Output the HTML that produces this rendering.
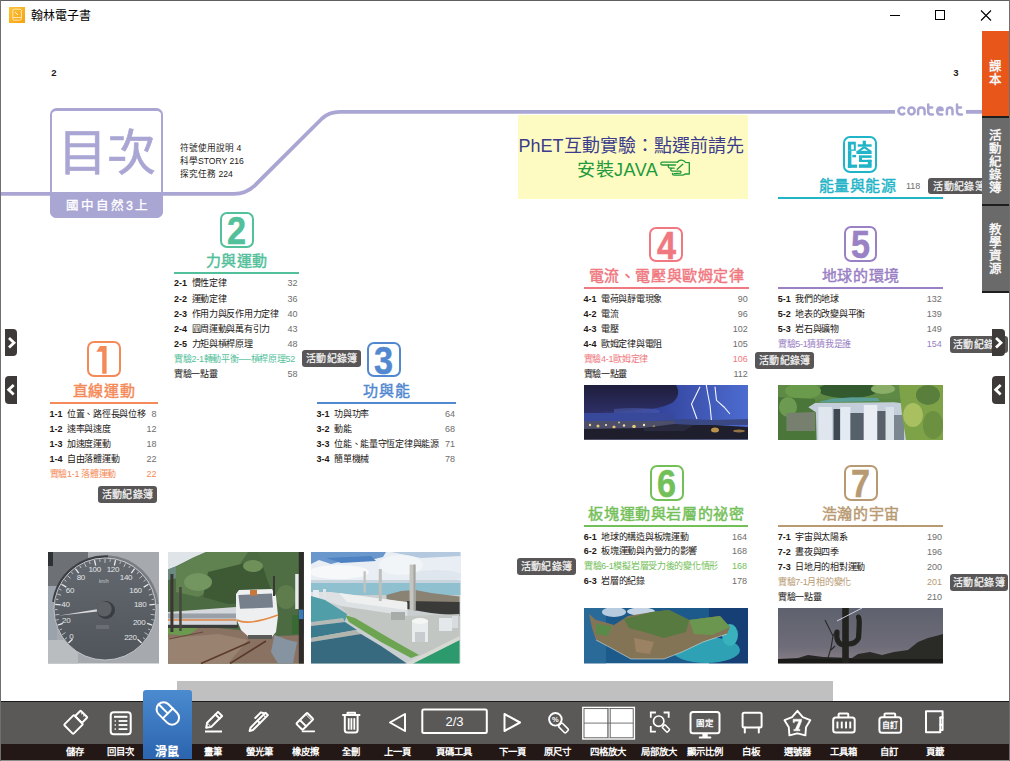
<!DOCTYPE html><html lang="zh-TW"><head><meta charset="utf-8"><style>
*{margin:0;padding:0;box-sizing:border-box}
html,body{width:1010px;height:761px;overflow:hidden;background:#fff}
body{position:relative;font-family:"Liberation Sans",sans-serif;color:#231815}
.ab{position:absolute}
.row{position:absolute;height:13px;font-size:9px;letter-spacing:-0.28px;line-height:13px;white-space:nowrap}
.row b{font-weight:bold;display:inline-block}
.row .pg{position:absolute;right:0;top:0;color:#6e6e6e;letter-spacing:0}
.row b{letter-spacing:0}
.ttl{position:absolute;font-size:15px;line-height:18px;font-weight:500;-webkit-text-stroke:0.45px;letter-spacing:0.6px;white-space:nowrap;text-align:center}
.nb{position:absolute;border:2.7px solid;border-radius:7px;font-weight:bold;text-align:center;font-size:38px;line-height:34.4px;-webkit-text-stroke:0.5px}
.nb span{display:inline-block;transform:scaleX(0.9)}
.ul{position:absolute;height:1.7px}
.badge{position:absolute;background:#585656;color:#f4f4f4;font-size:10px;letter-spacing:0.4px;text-indent:0.4px;font-weight:500;-webkit-text-stroke:0.25px;line-height:16px;height:16.5px;border-radius:3px;text-align:center;white-space:nowrap;overflow:hidden}
.tb{position:absolute;color:#fff;font-size:9.4px;font-weight:bold;line-height:14px;text-align:center;white-space:nowrap}
</style></head><body>
<svg class="ab" style="left:0;top:0" width="1010" height="761">
<path d="M0 193.8 L234 193.8 Q246 193.8 255 185.3 L322 118.5 Q329 111.85 340 111.85 L895 111.85" fill="none" stroke="#aaa6d4" stroke-width="3.8"/>
<path d="M966 111.85 L983 111.85" fill="none" stroke="#aaa6d4" stroke-width="3.8"/>
</svg>
<div class="ab" style="left:50.1px;top:107.7px;width:112.6px;height:110px;border:2.9px solid #aaa6d4;border-top-width:3.2px;border-radius:6.5px;background:#fff"></div>
<div class="ab" style="left:50.1px;top:191.9px;width:112.6px;height:25.8px;background:#aaa6d4;border-radius:0 0 6.5px 6.5px"></div>
<div class="ab" style="left:50px;top:123px;width:113px;text-align:center;font-size:49px;line-height:60px;color:#aaa6d4;font-weight:500;-webkit-text-stroke:0.6px">目次</div>
<div class="ab" style="left:51.5px;top:197px;width:113px;text-align:center;font-size:12.5px;line-height:18px;color:#fff;letter-spacing:2px;font-weight:500;-webkit-text-stroke:0.3px">國中自然3上</div>
<div class="ab" style="left:180px;top:141.8px;font-size:8.6px;line-height:13.3px;color:#231815">符號使用說明 4<br>科學STORY 216<br>探究任務 224</div>
<svg class="ab" style="left:0;top:0" width="1010" height="130"><g fill="none" stroke="#aaa6d4" stroke-width="2.5" stroke-linecap="round" stroke-linejoin="round"><path d="M904.3,108.3 A3.4,3.5 0 1 0 904.3,113.5"/><ellipse cx="911.5" cy="110.9" rx="3.2" ry="3.5"/><path d="M918.1,114.3 L918.1,110.6 Q918.1,107.4 921.35,107.4 Q924.6,107.4 924.6,110.6 L924.6,114.3"/><path d="M928.2,104.4 L928.2,111.5 Q928.2,114.4 931,114.4 L932.8,114.4 M928.2,107.6 L932.2,107.6"/><path d="M937.3,110 L942.6,110 Q942.6,107.4 939.9,107.4 Q937.2,107.4 937.2,110.9 Q937.2,114.4 940.2,114.4 L942.2,114.4"/><path d="M946.9,114.3 L946.9,110.6 Q946.9,107.4 949.7,107.4 Q952.5,107.4 952.5,110.6 L952.5,114.3"/><path d="M957,104.4 L957,111.5 Q957,114.4 959.8,114.4 L961.9,114.4 M957,107.6 L961,107.6"/></g></svg>
<div class="ab" style="left:51.3px;top:66.8px;font-size:9.5px;font-weight:bold;line-height:12px">2</div>
<div class="ab" style="left:953.3px;top:66.8px;font-size:9.5px;font-weight:bold;line-height:12px">3</div>
<div class="ab" style="left:518px;top:114.5px;width:230px;height:84.5px;background:#fdfbc2"></div>
<div class="ab" style="left:516px;top:135px;width:230px;text-align:center;font-size:18px;line-height:22px;color:#3c3b8c;white-space:nowrap">PhET互動實驗：點選前請先</div>
<div class="ab" style="left:577px;top:158.5px;font-size:18px;line-height:22px;color:#1e9a3c;white-space:nowrap;letter-spacing:0.5px">安裝JAVA</div>
<svg class="ab" style="left:655px;top:155px" width="40" height="27" viewBox="0 0 40 27"><g fill="none" stroke="#1e9a3c" stroke-width="1.3" stroke-linejoin="round" stroke-linecap="round"><path d="M22.5,7.2 L7,7.2 Q5.8,7.4 5.8,8.6 Q5.8,10 7,10 L20.5,10"/><path d="M22.5,7.2 Q24,5 26.5,5.2 Q29,5.4 30.5,7.4 L34.3,7.6 L34.3,19 L30.2,19 Q29,20.2 27,20.2 L18.8,20.2 Q17.2,20 17.4,18.4"/><path d="M13.4,10.2 Q12.8,12.8 14.8,13.2 L19.2,13.2"/><path d="M16.2,13.4 Q15,15.6 17.2,16.2 L25,16.2 Q26.6,16.8 25.6,18.2 L19,18.6"/><path d="M27.8,9.3 L22.2,14.3"/></g></svg>
<div class="nb" style="left:86.5px;top:340.9px;width:34.3px;height:36.1px;border-color:#f48a58;color:#f48a58"></div>
<svg class="ab" style="left:0;top:0" width="200" height="400"><path d="M96.3,351.8 L100,346 L106.6,345.9 L106.6,373.7 L102.2,373.7 L102.2,351.8 Z" fill="#f48a58"/></svg>
<div class="ttl" style="left:20.0px;width:168.1px;top:381.7px;color:#f48a58">直線運動</div>
<div class="ul" style="left:49.5px;width:108.1px;top:402.0px;background:#f48a58"></div>
<div class="row" style="left:49.5px;width:107.1px;top:408.2px;"><b style="width:17.5px">1-1</b><span>位置、路徑長與位移</span><span class="pg" style="">8</span></div>
<div class="row" style="left:49.5px;width:107.1px;top:423.2px;"><b style="width:17.5px">1-2</b><span>速率與速度</span><span class="pg" style="">12</span></div>
<div class="row" style="left:49.5px;width:107.1px;top:438.2px;"><b style="width:17.5px">1-3</b><span>加速度運動</span><span class="pg" style="">18</span></div>
<div class="row" style="left:49.5px;width:107.1px;top:453.2px;"><b style="width:17.5px">1-4</b><span>自由落體運動</span><span class="pg" style="">22</span></div>
<div class="row" style="left:49.5px;width:107.1px;top:468.2px;color:#f48a58;"><span>實驗1-1 落體運動</span><span class="pg" style="color:#f48a58">22</span></div>
<div class="badge" style="left:97.9px;top:485.9px;width:59.0px;height:17.100000000000023px;line-height:18.100000000000023px">活動紀錄簿</div>
<div class="nb" style="left:219.5px;top:212px;width:34px;height:36px;border-color:#52c09a;color:#52c09a"><span>2</span></div>
<div class="ttl" style="left:144.5px;width:184.60000000000002px;top:251.7px;color:#52c09a">力與運動</div>
<div class="ul" style="left:174px;width:124.60000000000002px;top:272.3px;background:#52c09a"></div>
<div class="row" style="left:174px;width:123.60000000000002px;top:277.2px;"><b style="width:17.5px">2-1</b><span>慣性定律</span><span class="pg" style="">32</span></div>
<div class="row" style="left:174px;width:123.60000000000002px;top:292.59999999999997px;"><b style="width:17.5px">2-2</b><span>運動定律</span><span class="pg" style="">36</span></div>
<div class="row" style="left:174px;width:123.60000000000002px;top:307.8px;"><b style="width:17.5px">2-3</b><span>作用力與反作用力定律</span><span class="pg" style="">40</span></div>
<div class="row" style="left:174px;width:123.60000000000002px;top:322.8px;"><b style="width:17.5px">2-4</b><span>圓周運動與萬有引力</span><span class="pg" style="">43</span></div>
<div class="row" style="left:174px;width:123.60000000000002px;top:337.7px;"><b style="width:17.5px">2-5</b><span>力矩與槓桿原理</span><span class="pg" style="">48</span></div>
<div class="row" style="left:174px;width:123.60000000000002px;top:352.7px;color:#52c09a;"><span>實驗2-1轉動平衡──槓桿原理52</span><span class="pg" style="color:#52c09a"></span></div>
<div class="row" style="left:174px;width:123.60000000000002px;top:367.7px;"><span>實驗一點靈</span><span class="pg" style="">58</span></div>
<div class="badge" style="left:302.3px;top:350px;width:58.599999999999966px;height:16.80000000000001px;line-height:17.80000000000001px">活動紀錄簿</div>
<div class="nb" style="left:366.6px;top:342px;width:34px;height:35px;border-color:#5188d0;color:#5188d0"><span>3</span></div>
<div class="ttl" style="left:287.1px;width:199.39999999999998px;top:381.7px;color:#5188d0">功與能</div>
<div class="ul" style="left:316.6px;width:139.39999999999998px;top:402.3px;background:#5188d0"></div>
<div class="row" style="left:316.6px;width:138.39999999999998px;top:407.9px;"><b style="width:17.5px">3-1</b><span>功與功率</span><span class="pg" style="">64</span></div>
<div class="row" style="left:316.6px;width:138.39999999999998px;top:422.7px;"><b style="width:17.5px">3-2</b><span>動能</span><span class="pg" style="">68</span></div>
<div class="row" style="left:316.6px;width:138.39999999999998px;top:437.7px;"><b style="width:17.5px">3-3</b><span>位能、能量守恆定律與能源</span><span class="pg" style="">71</span></div>
<div class="row" style="left:316.6px;width:138.39999999999998px;top:452.5px;"><b style="width:17.5px">3-4</b><span>簡單機械</span><span class="pg" style="">78</span></div>
<div class="nb" style="left:842.9px;top:136px;width:34px;height:36.9px;border-color:#1fb4c8;border-width:2.5px"></div>
<svg class="ab" style="left:835px;top:130px" width="50" height="48"><g fill="#1fb4c8"><rect x="12.9" y="11.7" width="7.9" height="9.1"/><rect x="12.9" y="20.8" width="3.5" height="17"/><rect x="12.9" y="34.6" width="9.2" height="3.2"/><rect x="17.3" y="24.9" width="3.8" height="2.4"/><rect x="27.7" y="10.7" width="3.2" height="5"/><rect x="22.7" y="14.3" width="13.9" height="2.4"/><polygon points="22.3,21 28.2,16.5 30.4,16.5 36.6,21 33.2,21 29.3,18.4 25.6,21"/><rect x="21.4" y="20.8" width="15.2" height="3.2"/><rect x="24" y="25.3" width="12.6" height="2.6"/><rect x="24" y="27.5" width="3" height="3.2"/><rect x="24" y="29.8" width="12.6" height="2.2"/><rect x="32.8" y="29.8" width="3.8" height="5.5"/><rect x="24" y="34.3" width="12.6" height="3.5"/></g><rect x="16.2" y="14.5" width="2.6" height="5" fill="#fff"/></svg>
<div class="ttl" style="left:810px;width:95px;top:177px;color:#1fb4c8">能量與能源</div>
<div class="ab" style="left:906px;top:180px;font-size:9px;line-height:12px;color:#6e6e6e">118</div>
<div class="ul" style="left:777.8px;width:165px;top:197px;background:#1fb4c8"></div>
<div class="badge" style="left:928px;top:177.6px;width:62px;height:16.900000000000006px;line-height:17.900000000000006px">活動紀錄簿</div>
<div class="nb" style="left:649px;top:226.6px;width:34.4px;height:35.8px;border-color:#f07880;color:#f07880"><span>4</span></div>
<div class="ttl" style="left:554.0px;width:225.29999999999995px;top:266.7px;color:#f07880">電流、電壓與歐姆定律</div>
<div class="ul" style="left:583.5px;width:165.29999999999995px;top:286.90000000000003px;background:#f07880"></div>
<div class="row" style="left:583.5px;width:164.29999999999995px;top:293.4px;"><b style="width:17.5px">4-1</b><span>電荷與靜電現象</span><span class="pg" style="">90</span></div>
<div class="row" style="left:583.5px;width:164.29999999999995px;top:308.2px;"><b style="width:17.5px">4-2</b><span>電流</span><span class="pg" style="">96</span></div>
<div class="row" style="left:583.5px;width:164.29999999999995px;top:322.8px;"><b style="width:17.5px">4-3</b><span>電壓</span><span class="pg" style="">102</span></div>
<div class="row" style="left:583.5px;width:164.29999999999995px;top:337.7px;"><b style="width:17.5px">4-4</b><span>歐姆定律與電阻</span><span class="pg" style="">105</span></div>
<div class="row" style="left:583.5px;width:164.29999999999995px;top:352.8px;color:#f07880;"><span>實驗4-1歐姆定律</span><span class="pg" style="color:#f07880">106</span></div>
<div class="row" style="left:583.5px;width:164.29999999999995px;top:367.7px;"><span>實驗一點靈</span><span class="pg" style="">112</span></div>
<div class="badge" style="left:755.3px;top:351.7px;width:58.60000000000002px;height:17.100000000000023px;line-height:18.100000000000023px">活動紀錄簿</div>
<div class="nb" style="left:843.7px;top:226.4px;width:33.7px;height:36px;border-color:#9a80c4;color:#9a80c4"><span>5</span></div>
<div class="ttl" style="left:748.3px;width:225.0px;top:267.3px;color:#9a80c4">地球的環境</div>
<div class="ul" style="left:777.8px;width:165.0px;top:287.3px;background:#9a80c4"></div>
<div class="row" style="left:777.8px;width:164.0px;top:293.2px;"><b style="width:17.5px">5-1</b><span>我們的地球</span><span class="pg" style="">132</span></div>
<div class="row" style="left:777.8px;width:164.0px;top:308.2px;"><b style="width:17.5px">5-2</b><span>地表的改變與平衡</span><span class="pg" style="">139</span></div>
<div class="row" style="left:777.8px;width:164.0px;top:323.2px;"><b style="width:17.5px">5-3</b><span>岩石與礦物</span><span class="pg" style="">149</span></div>
<div class="row" style="left:777.8px;width:164.0px;top:338.2px;color:#9a80c4;"><span>實驗5-1猜猜我是誰</span><span class="pg" style="color:#9a80c4">154</span></div>
<div class="badge" style="left:950px;top:336.1px;width:57.60000000000002px;height:16.599999999999966px;line-height:17.599999999999966px">活動紀錄簿</div>
<div class="nb" style="left:650px;top:465px;width:33.5px;height:35.8px;border-color:#74c058;color:#74c058"><span>6</span></div>
<div class="ttl" style="left:554.3px;width:224.20000000000005px;top:505.2px;color:#74c058">板塊運動與岩層的祕密</div>
<div class="ul" style="left:583.8px;width:164.20000000000005px;top:525.3px;background:#74c058"></div>
<div class="row" style="left:583.8px;width:163.20000000000005px;top:530.9000000000001px;"><b style="width:17.5px">6-1</b><span>地球的構造與板塊運動</span><span class="pg" style="">164</span></div>
<div class="row" style="left:583.8px;width:163.20000000000005px;top:545.4000000000001px;"><b style="width:17.5px">6-2</b><span>板塊運動與內營力的影響</span><span class="pg" style="">168</span></div>
<div class="row" style="left:583.8px;width:163.20000000000005px;top:560.2px;color:#74c058;"><span>實驗6-1模擬岩層受力後的變化情形</span><span class="pg" style="color:#74c058">168</span></div>
<div class="row" style="left:583.8px;width:163.20000000000005px;top:575.2px;"><b style="width:17.5px">6-3</b><span>岩層的紀錄</span><span class="pg" style="">178</span></div>
<div class="badge" style="left:517.1px;top:557.9px;width:58.60000000000002px;height:17.100000000000023px;line-height:18.100000000000023px">活動紀錄簿</div>
<div class="nb" style="left:843.7px;top:464.5px;width:34.3px;height:36px;border-color:#b89a72;color:#b89a72"><span>7</span></div>
<div class="ttl" style="left:748.3px;width:225.20000000000005px;top:504.7px;color:#b89a72">浩瀚的宇宙</div>
<div class="ul" style="left:777.8px;width:165.20000000000005px;top:524.9px;background:#b89a72"></div>
<div class="row" style="left:777.8px;width:164.20000000000005px;top:531.2px;"><b style="width:17.5px">7-1</b><span>宇宙與太陽系</span><span class="pg" style="">190</span></div>
<div class="row" style="left:777.8px;width:164.20000000000005px;top:546.2px;"><b style="width:17.5px">7-2</b><span>晝夜與四季</span><span class="pg" style="">196</span></div>
<div class="row" style="left:777.8px;width:164.20000000000005px;top:560.7px;"><b style="width:17.5px">7-3</b><span>日地月的相對運動</span><span class="pg" style="">200</span></div>
<div class="row" style="left:777.8px;width:164.20000000000005px;top:575.7px;color:#b89a72;"><span>實驗7-1月相的變化</span><span class="pg" style="color:#b89a72">201</span></div>
<div class="row" style="left:777.8px;width:164.20000000000005px;top:590.7px;"><span>實驗一點靈</span><span class="pg" style="">210</span></div>
<div class="badge" style="left:949.8px;top:573.7px;width:58.200000000000045px;height:17.0px;line-height:18.0px">活動紀錄簿</div>
<svg class="ab" style="left:48px;top:552px" width="111" height="111.5" viewBox="0 0 111 111.5" preserveAspectRatio="none"><defs><linearGradient id="spd" x1="0" y1="0" x2="0" y2="1"><stop offset="0" stop-color="#646970"/><stop offset="1" stop-color="#50555b"/></linearGradient></defs><rect width="111" height="111.5" fill="#a6aaae"/><rect x="0" y="0" width="40" height="34" fill="#6d7176"/><rect x="0" y="0" width="5" height="14" fill="#2e3134"/><rect x="0" y="34" width="9" height="54" fill="#9aa3ac"/><rect x="0" y="88" width="30" height="23.5" fill="#b9bdc0"/><path d="M5.5,50 A52.5,52.5 0 0 1 60,4.5" fill="none" stroke="#3c3f44" stroke-width="2.6"/><path d="M60,4.5 A52.5,52.5 0 0 1 109.5,52" fill="none" stroke="#7a7e82" stroke-width="2.6"/><circle cx="57" cy="57" r="51" fill="url(#spd)" stroke="#c6cace" stroke-width="0.9"/><line x1="20.4" y1="91.1" x2="24.5" y2="87.3" stroke="#e8eaec" stroke-width="1.3"/><line x1="17.0" y1="87.1" x2="19.0" y2="85.6" stroke="#e8eaec" stroke-width="0.7"/><line x1="14.1" y1="82.7" x2="17.5" y2="80.6" stroke="#e8eaec" stroke-width="0.7"/><line x1="11.6" y1="78.0" x2="13.9" y2="77.0" stroke="#e8eaec" stroke-width="0.7"/><line x1="9.7" y1="73.1" x2="14.9" y2="71.4" stroke="#e8eaec" stroke-width="1.3"/><line x1="8.2" y1="68.1" x2="10.7" y2="67.5" stroke="#e8eaec" stroke-width="0.7"/><line x1="7.3" y1="62.9" x2="11.3" y2="62.4" stroke="#e8eaec" stroke-width="0.7"/><line x1="7.0" y1="57.6" x2="9.5" y2="57.6" stroke="#e8eaec" stroke-width="0.7"/><line x1="7.2" y1="52.3" x2="12.7" y2="52.8" stroke="#e8eaec" stroke-width="1.3"/><line x1="8.0" y1="47.1" x2="10.4" y2="47.6" stroke="#e8eaec" stroke-width="0.7"/><line x1="9.3" y1="42.0" x2="13.1" y2="43.2" stroke="#e8eaec" stroke-width="0.7"/><line x1="11.1" y1="37.1" x2="13.4" y2="38.1" stroke="#e8eaec" stroke-width="0.7"/><line x1="13.5" y1="32.3" x2="18.3" y2="35.1" stroke="#e8eaec" stroke-width="1.3"/><line x1="16.3" y1="27.9" x2="18.4" y2="29.4" stroke="#e8eaec" stroke-width="0.7"/><line x1="19.6" y1="23.8" x2="22.6" y2="26.4" stroke="#e8eaec" stroke-width="0.7"/><line x1="23.3" y1="20.0" x2="25.0" y2="21.9" stroke="#e8eaec" stroke-width="0.7"/><line x1="27.4" y1="16.7" x2="30.7" y2="21.1" stroke="#e8eaec" stroke-width="1.3"/><line x1="31.8" y1="13.8" x2="33.1" y2="16.0" stroke="#e8eaec" stroke-width="0.7"/><line x1="36.5" y1="11.4" x2="38.2" y2="15.0" stroke="#e8eaec" stroke-width="0.7"/><line x1="41.4" y1="9.5" x2="42.2" y2="11.9" stroke="#e8eaec" stroke-width="0.7"/><line x1="46.5" y1="8.1" x2="47.7" y2="13.5" stroke="#e8eaec" stroke-width="1.3"/><line x1="51.7" y1="7.3" x2="52.0" y2="9.8" stroke="#e8eaec" stroke-width="0.7"/><line x1="57.0" y1="7.0" x2="57.0" y2="11.0" stroke="#e8eaec" stroke-width="0.7"/><line x1="62.3" y1="7.3" x2="62.0" y2="9.8" stroke="#e8eaec" stroke-width="0.7"/><line x1="67.5" y1="8.1" x2="66.3" y2="13.5" stroke="#e8eaec" stroke-width="1.3"/><line x1="72.6" y1="9.5" x2="71.8" y2="11.9" stroke="#e8eaec" stroke-width="0.7"/><line x1="77.5" y1="11.4" x2="75.8" y2="15.0" stroke="#e8eaec" stroke-width="0.7"/><line x1="82.2" y1="13.8" x2="80.9" y2="16.0" stroke="#e8eaec" stroke-width="0.7"/><line x1="86.6" y1="16.7" x2="83.3" y2="21.1" stroke="#e8eaec" stroke-width="1.3"/><line x1="90.7" y1="20.0" x2="89.0" y2="21.9" stroke="#e8eaec" stroke-width="0.7"/><line x1="94.4" y1="23.8" x2="91.4" y2="26.4" stroke="#e8eaec" stroke-width="0.7"/><line x1="97.7" y1="27.9" x2="95.6" y2="29.4" stroke="#e8eaec" stroke-width="0.7"/><line x1="100.5" y1="32.3" x2="95.7" y2="35.1" stroke="#e8eaec" stroke-width="1.3"/><line x1="102.9" y1="37.1" x2="100.6" y2="38.1" stroke="#e8eaec" stroke-width="0.7"/><line x1="104.7" y1="42.0" x2="100.9" y2="43.2" stroke="#e8eaec" stroke-width="0.7"/><line x1="106.0" y1="47.1" x2="103.6" y2="47.6" stroke="#e8eaec" stroke-width="0.7"/><line x1="106.8" y1="52.3" x2="101.3" y2="52.8" stroke="#e8eaec" stroke-width="1.3"/><line x1="107.0" y1="57.6" x2="104.5" y2="57.6" stroke="#e8eaec" stroke-width="0.7"/><line x1="106.7" y1="62.9" x2="102.7" y2="62.4" stroke="#e8eaec" stroke-width="0.7"/><line x1="105.8" y1="68.1" x2="103.3" y2="67.5" stroke="#e8eaec" stroke-width="0.7"/><line x1="104.3" y1="73.1" x2="99.1" y2="71.4" stroke="#e8eaec" stroke-width="1.3"/><line x1="102.4" y1="78.0" x2="100.1" y2="77.0" stroke="#e8eaec" stroke-width="0.7"/><line x1="99.9" y1="82.7" x2="96.5" y2="80.6" stroke="#e8eaec" stroke-width="0.7"/><line x1="97.0" y1="87.1" x2="95.0" y2="85.6" stroke="#e8eaec" stroke-width="0.7"/><line x1="93.6" y1="91.1" x2="89.5" y2="87.3" stroke="#e8eaec" stroke-width="1.3"/><text x="23.3" y="86.80000000000001" font-size="8" fill="#e2e4e6" text-anchor="middle" font-family="Liberation Sans" letter-spacing="-0.3">0</text><text x="18.2" y="71.4" font-size="8" fill="#e2e4e6" text-anchor="middle" font-family="Liberation Sans" letter-spacing="-0.3">20</text><text x="17.5" y="54.699999999999996" font-size="8" fill="#e2e4e6" text-anchor="middle" font-family="Liberation Sans" letter-spacing="-0.3">40</text><text x="21.9" y="40.5" font-size="8" fill="#e2e4e6" text-anchor="middle" font-family="Liberation Sans" letter-spacing="-0.3">60</text><text x="32.8" y="28.4" font-size="8" fill="#e2e4e6" text-anchor="middle" font-family="Liberation Sans" letter-spacing="-0.3">80</text><text x="46.7" y="20.4" font-size="8" fill="#e2e4e6" text-anchor="middle" font-family="Liberation Sans" letter-spacing="-0.3">100</text><text x="64.9" y="20.4" font-size="8" fill="#e2e4e6" text-anchor="middle" font-family="Liberation Sans" letter-spacing="-0.3">120</text><text x="78" y="28.4" font-size="8" fill="#e2e4e6" text-anchor="middle" font-family="Liberation Sans" letter-spacing="-0.3">140</text><text x="87.5" y="40.5" font-size="8" fill="#e2e4e6" text-anchor="middle" font-family="Liberation Sans" letter-spacing="-0.3">160</text><text x="92.2" y="55.4" font-size="8" fill="#e2e4e6" text-anchor="middle" font-family="Liberation Sans" letter-spacing="-0.3">180</text><text x="91.2" y="73.2" font-size="8" fill="#e2e4e6" text-anchor="middle" font-family="Liberation Sans" letter-spacing="-0.3">200</text><text x="82.4" y="87.5" font-size="8" fill="#e2e4e6" text-anchor="middle" font-family="Liberation Sans" letter-spacing="-0.3">220</text><text x="56" y="31" font-size="4.5" fill="#c8cacc" text-anchor="middle" font-family="Liberation Sans">km/h</text><rect x="48" y="73" width="13" height="4" fill="#6a6e72"/><polygon points="10,63.8 49,57.2 49.5,59.5" fill="#d8dadc"/><circle cx="58" cy="58" r="9" fill="#3a3d41"/><circle cx="56.2" cy="56.9" r="7.5" fill="#5d6166"/></svg>
<svg class="ab" style="left:168px;top:552px" width="136.3" height="111.5" viewBox="0 0 136.3 111.5" preserveAspectRatio="none"><rect width="136.3" height="111.5" fill="#4d6b42"/>
<polygon points="0,0 38.2,0 25,5.8 7.6,14.6 0,17.5" fill="#dfe4e8"/>
<polygon points="0,17.5 7.6,14.6 10,26 0,28" fill="#6c8a80"/>
<polygon points="8,15 25,5.8 38.2,0 80,0 60,30 30,45 8,40" fill="#5f8250"/>
<polygon points="40,20 90,8 110,30 100,50 60,52 35,45" fill="#3d5a34"/>
<polygon points="90,0 136.3,0 136.3,60 110,55 100,30" fill="#506e44"/>
<ellipse cx="30" cy="30" rx="14" ry="9" fill="#739560"/>
<ellipse cx="85" cy="14" rx="10" ry="6" fill="#6f9058"/>
<ellipse cx="118" cy="45" rx="10" ry="12" fill="#5e7c4c"/>
<polygon points="0,74 40,75 70,78 110,84 136.3,83 136.3,111.5 0,111.5" fill="#8a7262"/>
<polygon points="0,86 50,82 80,88 60,111.5 0,111.5" fill="#9a8270"/>
<polygon points="0,76 30,76 20,84 0,82" fill="#6a9a50"/>
<path d="M33,111.5 L82,90 M62,111.5 L98,89" stroke="#5a3a2a" stroke-width="1.6" fill="none"/>
<path d="M1,87 L35,80" stroke="#6a4a3a" stroke-width="1.2" fill="none"/>
<polygon points="106.5,83 120,88 129,90 125,111.5 110,111.5 103,100" fill="#8694a2"/>
<polygon points="0,60 68,55 69,74 0,73" fill="#d4d8dc"/>
<rect x="0" y="61.5" width="68" height="5" fill="#9aa0a8"/>
<rect x="0" y="67.2" width="68" height="1.5" fill="#de8444"/>
<rect x="0" y="72.8" width="70" height="3.2" fill="#3c3c3a"/>
<polygon points="68,42 71,38 104,37 108,44 110,64 108,80 103,86 82,86 73,78 68,66" fill="#eeeff1"/>
<polygon points="70.5,43 104,41.5 105,55.5 72,56.8" fill="#75808c"/>
<rect x="82" y="38" width="7" height="5.5" fill="#c8783c"/>
<path d="M69,68 Q80,74 110,63" stroke="#e48a44" stroke-width="1.6" fill="none"/>
<rect x="80" y="83" width="24" height="4" fill="#5a5a58"/>
<rect x="2.4" y="22" width="3" height="58" fill="#3a3632"/>
<rect x="11.2" y="35" width="2.5" height="44" fill="#4a4640"/>
<rect x="105" y="24" width="2" height="20" fill="#3a3a34"/>
<rect x="127.2" y="22" width="3.6" height="35" fill="#e6eaea"/>
<rect x="124" y="63" width="7" height="19" fill="#3a6a34"/>
<rect x="130.8" y="0" width="5" height="111.5" fill="#2e2c2a"/>
<rect x="131" y="57.6" width="4.5" height="9.5" fill="#3a78bc"/></svg>
<svg class="ab" style="left:311.2px;top:552px" width="149.4" height="111.5" viewBox="0 0 149.4 111.5" preserveAspectRatio="none"><rect width="149.4" height="111.5" fill="#c9ced0"/>
<rect x="0" y="0" width="149.4" height="31" fill="#e8eef4"/>
<polygon points="0,0 75,0 72,5 55,9 40,7 20,12 8,8 0,12" fill="#6a98cc"/>
<polygon points="15,6 60,4 65,9 30,11" fill="#4e82c2"/>
<polygon points="80,0 149.4,0 149.4,4 110,6" fill="#b4c8de"/>
<ellipse cx="28" cy="20" rx="30" ry="7" fill="#f6f8fa"/>
<ellipse cx="90" cy="13" rx="22" ry="10" fill="#f2f5f8"/>
<ellipse cx="125" cy="24" rx="26" ry="6" fill="#dfe6ee"/>
<rect x="0" y="28" width="149.4" height="4" fill="#c8d4de"/>
<rect x="0" y="31" width="149.4" height="12" fill="#8ec0d0"/>
<polygon points="75.5,43 90,39 104,37.9 120,41 148.5,44.6 148.5,62.4 96,54 75.5,47" fill="#8a8272"/>
<polygon points="96,49 148.5,50 148.5,64 120,61 96,57" fill="#3a3a38"/>
<polygon points="0,40 20,40 96.4,50.5 96.4,68.3 60,64 30,54 0,44" fill="#dde1e3"/>
<polygon points="28,41 96,50 96,58 36,50" fill="#eef0f0"/>
<rect x="2" y="38" width="6" height="10" fill="#e8ecee"/><rect x="12" y="37" width="3" height="10" fill="#e0e4e6"/>
<polygon points="30,54 96.4,64 148.5,62 148.5,86 108,104 72,86 40,66" fill="#c2c6c2"/>
<polygon points="0,44 14,48 36,62 34,69 0,71" fill="#4f9ea8"/>
<polygon points="0,70 32,66 34,70 0,74" fill="#b6bab6"/>
<polygon points="0,74 34,70 46,78 0,86" fill="#3c7a8e"/>
<polygon points="0,86 44,78 50,82 0,90" fill="#b2b4ae"/>
<polygon points="0,90 50,82 70,94 96,111.5 0,111.5" fill="#376a7e"/>
<polygon points="34,63 44,66 78,86 108,103 100,106 70,90 38,70" fill="#6ca452"/>
<polygon points="148.5,88 148.5,111.5 102,111.5" fill="#2c9a6c"/>
<polygon points="148.5,84 148.5,88 102,111.5 94,111.5" fill="#d6d8d2"/>
<rect x="52.5" y="19.3" width="2.3" height="21.5" fill="#c2c2be"/>
<rect x="67.8" y="17.1" width="3" height="32" fill="#bebeba"/>
<rect x="98.6" y="12.6" width="5.9" height="45.4" fill="#c4c4c0"/>
<rect x="102.5" y="12.6" width="2" height="45.4" fill="#a4a4a0"/>
<rect x="80" y="60" width="14" height="8" fill="#a8aca8"/>
<rect x="101" y="68" width="16" height="22" fill="#e8ecec"/>
<ellipse cx="109" cy="69" rx="8" ry="3" fill="#f4f6f6"/>
<rect x="104" y="80" width="10" height="10" fill="#c8ccce"/>
<rect x="128" y="66" width="13" height="13" fill="#e4e8ea"/>
<rect x="141" y="64" width="6" height="12" fill="#d8dcde"/></svg>
<svg class="ab" style="left:583.7px;top:385px" width="164.6" height="54.6" viewBox="0 0 164.6 54.6" preserveAspectRatio="none"><defs><linearGradient id="lg1" x1="0" x2="1"><stop offset="0" stop-color="#2e2d5a"/><stop offset="0.45" stop-color="#33449c"/><stop offset="1" stop-color="#4d6cd0"/></linearGradient>
<linearGradient id="lg2" x1="0" y1="0" x2="0" y2="1"><stop offset="0" stop-color="#1f1e3c"/><stop offset="1" stop-color="#2d2f66"/></linearGradient></defs>
<rect width="164.6" height="54.6" fill="url(#lg1)"/>
<path d="M0,0 L92,0 Q98,10 88,18 Q76,24 60,24 Q40,27 20,26 L0,28 Z" fill="url(#lg2)"/>
<path d="M30,24 Q50,22 70,24 Q80,26 74,28 Q50,30 30,29 Z" fill="#4a5aa8" opacity="0.6"/>
<rect x="0" y="28" width="90" height="9" fill="#38489a"/>
<polygon points="70,36 100,34 130,35 164.6,34 164.6,40 70,40" fill="#3a4884"/>
<polygon points="0,36 90,36 92,44 0,45" fill="#4c4e6a"/>
<circle cx="6" cy="40" r="1.2" fill="#f0d890"/><circle cx="14" cy="41" r="1.5" fill="#e8c878"/><circle cx="22" cy="40" r="1" fill="#fff0c0"/>
<circle cx="30" cy="42" r="1.6" fill="#e8c070"/><circle cx="40" cy="40.5" r="1.2" fill="#f4e0a0"/><circle cx="50" cy="41.5" r="1.8" fill="#e8c878"/>
<circle cx="60" cy="40" r="1.2" fill="#f8e8b0"/><circle cx="70" cy="42" r="1.4" fill="#d8b068"/><circle cx="35" cy="37.5" r="1" fill="#d0c0a0"/>
<polygon points="0,44 60,43 90,40 130,40 164.6,42 164.6,54.6 0,54.6" fill="#1e1e2c"/>
<polygon points="60,43 90,39 110,40 100,46 60,46" fill="#2a2a3e"/>
<ellipse cx="131" cy="45" rx="4" ry="2.5" fill="#d8a850" opacity="0.85"/>
<ellipse cx="155" cy="46" rx="6" ry="1.5" fill="#c89850" opacity="0.7"/>
<path d="M122.3,0 L124,10 L126,20 L127.4,35 M116,1.7 L111,12 L107.5,19 L113,34 M131,1.7 L132.5,15.3 L140,22 L146,29" stroke="#f2f5ff" stroke-width="1.1" fill="none"/></svg>
<svg class="ab" style="left:777.7px;top:385px" width="165" height="55" viewBox="0 0 165 55" preserveAspectRatio="none"><rect width="165" height="55" fill="#5a8844"/>
<rect x="0" y="0" width="165" height="14" fill="#5e8a46"/>
<ellipse cx="70" cy="5" rx="30" ry="8" fill="#33592f"/>
<ellipse cx="25" cy="6" rx="18" ry="8" fill="#6a9a4c"/>
<ellipse cx="105" cy="4" rx="12" ry="5" fill="#8aae68"/>
<polygon points="0,12 37,14 38,55 0,55" fill="#4a763a"/>
<ellipse cx="10" cy="22" rx="9" ry="10" fill="#6c9a50"/>
<polygon points="8.4,28 37,27 37,46 8.4,46" fill="#77806e"/>
<polygon points="42,16.4 53.9,13.8 74,12.2 99.3,13 101.8,15.9 42,17.5" fill="#5a9e98"/>
<polygon points="30.3,22.3 37,18 116.2,17.2 129.6,18.9 126.2,30.7 129.6,55 38.7,55 37.9,27.3" fill="#c4ceda"/>
<rect x="40.4" y="22" width="13.5" height="33" fill="#dfe6ee"/>
<rect x="55.5" y="24" width="6.8" height="31" fill="#3e4852"/>
<rect x="62.3" y="22" width="10.1" height="33" fill="#e4eaf2"/>
<rect x="72.4" y="28" width="13.4" height="27" fill="#56606a"/>
<rect x="85.8" y="20" width="13.5" height="35" fill="#e8eef4"/>
<rect x="99.3" y="26" width="8.4" height="29" fill="#58606a"/>
<rect x="107.7" y="22" width="8.3" height="33" fill="#d8e0e8"/>
<rect x="116" y="30" width="10" height="25" fill="#7a8690"/>
<polygon points="121,0 165,0 165,55 128,55 124,30" fill="#7ea248"/>
<ellipse cx="135" cy="30" rx="10" ry="12" fill="#a8c060"/>
<ellipse cx="155" cy="40" rx="10" ry="14" fill="#6a9040"/>
<ellipse cx="150" cy="10" rx="12" ry="10" fill="#5a7e3c"/></svg>
<svg class="ab" style="left:583.7px;top:608.3px" width="164.6" height="55.3" viewBox="0 0 164.6 55.3" preserveAspectRatio="none"><rect width="164.6" height="55.3" fill="#1d5a8c"/>
<rect x="0" y="0" width="22" height="55.3" fill="#2a6a98"/>
<rect x="125" y="0" width="39.6" height="55.3" fill="#163f76"/>
<ellipse cx="30" cy="4" rx="12" ry="5" fill="#b8cce0"/>
<ellipse cx="57" cy="3.5" rx="14" ry="4" fill="#c4d4e4"/>
<ellipse cx="122" cy="42" rx="34" ry="13" fill="#2ea2b4"/>
<ellipse cx="146" cy="27" rx="8" ry="11" fill="#3ab2be"/>
<polygon points="5,6 12,12 20,14 30,17 44,8 68,4 85,2 105,12 136,8 146,19 143,26 119,34 98,44 80,51 47,51 27,40 12,32 8,20" fill="#847456"/>
<polygon points="40,11 68,4 85,2 105,12 102,24 80,30 60,24 45,20" fill="#567a40"/>
<polygon points="105,12 136,8 146,19 128,27 110,26" fill="#6a9650"/>
<polygon points="12,16 28,18 24,28 12,26" fill="#5a8a4a"/>
<polygon points="50,30 70,34 66,46 52,44" fill="#9a8262"/>
<path d="M12,32 L27,40 L47,51 L80,51 L98,44 L119,34 L143,26" stroke="#d8e8ec" stroke-width="0.8" fill="none" opacity="0.7"/></svg>
<svg class="ab" style="left:778.1px;top:608.3px" width="165" height="55.3" viewBox="0 0 165 55.3" preserveAspectRatio="none"><defs><linearGradient id="cg1" x1="0" y1="0" x2="0" y2="1"><stop offset="0" stop-color="#5e626e"/><stop offset="0.7" stop-color="#6e6c78"/><stop offset="1" stop-color="#8a8088"/></linearGradient></defs>
<rect width="165" height="55.3" fill="url(#cg1)"/>
<polygon points="74,50 80,46 92,44 104,47 116,44 130,42 140,34 150,30 158,28 165,26 165,55.3 74,55.3" fill="#2a2a26"/>
<polygon points="20,50 30,47 45,49 74,50 74,55.3 0,55.3 0,51" fill="#262624"/>
<rect x="0" y="51" width="165" height="4.3" fill="#1a1a18"/>
<path d="M67.5,0 L67.5,55" stroke="#22221f" stroke-width="6.6"/>
<path d="M59,24 Q57.5,36 66,37 M80.5,9 Q82,9 80.5,30 Q78,36 70,36" stroke="#22221f" stroke-width="5.2" fill="none" stroke-linecap="round"/>
<path d="M47,12 L55,28 L53,40 L50,50 M55,28 L58,22 M53,42 L57,38" stroke="#2a2826" stroke-width="1.1" fill="none"/>
<path d="M59,13 L84,0" stroke="#d8e0ee" stroke-width="0.9"/></svg>
<div class="ab" style="left:4.5px;top:328.5px;width:12.7px;height:27.4px;background:#3e3a39;border-radius:0 4px 4px 0"></div>
<svg class="ab" style="left:4.5px;top:328.5px" width="13" height="28"><path d="M4,9 L9,13.7 L4,18.4" fill="none" stroke="#fff" stroke-width="2.8" stroke-linejoin="miter" stroke-miterlimit="3"/></svg>
<div class="ab" style="left:4.5px;top:376.2px;width:12.7px;height:27.4px;background:#3e3a39;border-radius:4px 0 0 4px"></div>
<svg class="ab" style="left:4.5px;top:376.2px" width="13" height="28"><path d="M8.7,9 L3.7,13.7 L8.7,18.4" fill="none" stroke="#fff" stroke-width="2.8" stroke-linejoin="miter" stroke-miterlimit="3"/></svg>
<div class="ab" style="left:992.2px;top:328.5px;width:12.7px;height:27.4px;background:#3e3a39;border-radius:0 4px 4px 0"></div>
<svg class="ab" style="left:992.2px;top:328.5px" width="13" height="28"><path d="M4,9 L9,13.7 L4,18.4" fill="none" stroke="#fff" stroke-width="2.8" stroke-linejoin="miter" stroke-miterlimit="3"/></svg>
<div class="ab" style="left:992.2px;top:376.2px;width:12.7px;height:27.4px;background:#3e3a39;border-radius:4px 0 0 4px"></div>
<svg class="ab" style="left:992.2px;top:376.2px" width="13" height="28"><path d="M8.7,9 L3.7,13.7 L8.7,18.4" fill="none" stroke="#fff" stroke-width="2.8" stroke-linejoin="miter" stroke-miterlimit="3"/></svg>
<div class="ab" style="left:982.1px;top:116px;width:26.9px;height:176.6px;background:#6b6a6a"></div>
<div class="ab" style="left:982.1px;top:31px;width:26.9px;height:85.4px;background:#e8561a"></div>
<div class="ab" style="left:982.1px;top:116.4px;width:26.9px;height:1.9px;background:#1e1e1e"></div>
<div class="ab" style="left:982.1px;top:204px;width:26.9px;height:2px;background:#1e1e1e"></div>
<div class="ab" style="left:982.1px;top:290.8px;width:26.9px;height:1.8px;background:#1e1e1e"></div>
<div class="ab" style="left:982.8px;top:61.400000000000006px;width:26px;text-align:center;color:#f4f4f4;font-size:12.5px;line-height:13px;font-weight:bold">課<br>本</div>
<div class="ab" style="left:982.8px;top:129.8px;width:26px;text-align:center;color:#f4f4f4;font-size:12.5px;line-height:13px;font-weight:bold">活<br>動<br>紀<br>錄<br>簿</div>
<div class="ab" style="left:982.8px;top:223.6px;width:26px;text-align:center;color:#f4f4f4;font-size:12.5px;line-height:13px;font-weight:bold">教<br>學<br>資<br>源</div>
<div class="ab" style="left:177px;top:681px;width:656px;height:20px;background:#c0c0c0"></div>
<div class="ab" style="left:0;top:700.5px;width:1010px;height:1.5px;background:#1a1a1a"></div>
<div class="ab" style="left:0;top:702px;width:1010px;height:42px;background:#5a5958"></div>
<div class="ab" style="left:0;top:743.6px;width:1010px;height:16.2px;background:#231815"></div>
<div class="ab" style="left:0;top:759.8px;width:1010px;height:1.2px;background:#8c8c8c"></div>
<div class="ab" style="left:143px;top:689.7px;width:48.5px;height:69.5px;background:linear-gradient(#4b8bd0,#2c64ae);border-radius:3px 3px 0 0"></div>
<svg class="ab" style="left:0;top:0" width="1010" height="761"><g transform="translate(73.5,724.5) rotate(-45)" fill="none" stroke="#ffffff" stroke-width="2" stroke-linejoin="round" stroke-linecap="round"><rect x="-7" y="-6.5" width="14" height="13" rx="1"/><rect x="7" y="-4.8" width="7.8" height="9.6" rx="0.5"/></g><circle cx="81.5" cy="713.8" r="0.6" fill="#fff"/><circle cx="83.6" cy="715.9" r="0.6" fill="#fff"/><rect x="110.7" y="712.3" width="20" height="22" rx="3" fill="none" stroke="#ffffff" stroke-width="2" stroke-linejoin="round" stroke-linecap="round"/><rect x="114" y="715.8" width="13.4" height="2" fill="#fff"/><rect x="114.6" y="720.3000000000001" width="1.4" height="1.4" fill="#fff"/><rect x="118.6" y="720.1" width="8.8" height="1.8" fill="#fff"/><rect x="114.6" y="724.3000000000001" width="1.4" height="1.4" fill="#fff"/><rect x="118.6" y="724.1" width="8.8" height="1.8" fill="#fff"/><rect x="114.6" y="728.4000000000001" width="1.4" height="1.4" fill="#fff"/><rect x="118.6" y="728.2" width="8.8" height="1.8" fill="#fff"/><g transform="translate(167.8,713.4) rotate(45)" fill="none" stroke="#ffffff" stroke-width="2" stroke-linejoin="round" stroke-linecap="round"><rect x="-13" y="-7" width="26" height="14" rx="7"/><line x1="0" y1="-7" x2="0" y2="7"/><line x1="-13" y1="0" x2="0" y2="0"/></g><g transform="translate(206.2,727.8) rotate(-45)" fill="none" stroke="#ffffff" stroke-width="2" stroke-linejoin="round" stroke-linecap="round" stroke-width="1.7"><path d="M0,0 L4.2,-2.9 L19.6,-2.9 L19.6,2.9 L4.2,2.9 Z"/><line x1="16" y1="-2.9" x2="16" y2="2.9"/><line x1="4.2" y1="-2.9" x2="4.2" y2="2.9" stroke-width="0.9"/></g><rect x="205" y="730.5" width="17" height="2" fill="#fff"/><g transform="translate(249.6,731) rotate(-45)" fill="none" stroke="#ffffff" stroke-width="2" stroke-linejoin="round" stroke-linecap="round" stroke-width="1.9"><path d="M0,0 L3,-1.7 L24.2,-1.7 L24.2,1.7 L3,1.7 Z"/><line x1="12.9" y1="-1.7" x2="12.9" y2="1.7"/><path d="M13.2,-5.2 L21.2,-5.2 L22.6,-2.4"/></g><g transform="translate(249.6,731) rotate(-45)"><circle cx="21.2" cy="0.2" r="0.8" fill="#fff"/></g><g transform="translate(304.8,721.4) rotate(-45)" fill="none" stroke="#ffffff" stroke-width="2" stroke-linejoin="round" stroke-linecap="round"><rect x="-7.7" y="-4.5" width="15.4" height="9" rx="1"/><line x1="-2.5" y1="-4.5" x2="-2.5" y2="4.5"/><line x1="5.6" y1="-4.5" x2="5.6" y2="4.5" stroke-width="0.9"/></g><line x1="302.6" y1="731.3" x2="314.2" y2="731.3" stroke="#fff" stroke-width="1.8" stroke-linecap="round"/><path d="M343,715 L359.5,715 M347.5,715 L347.5,712.8 L355,712.8 L355,715" fill="none" stroke="#ffffff" stroke-width="2" stroke-linejoin="round" stroke-linecap="round"/><path d="M344.8,715.5 L344.8,730 Q344.8,732.6 347.4,732.6 L355.2,732.6 Q357.6,732.6 357.6,730 L357.6,715.5" fill="none" stroke="#ffffff" stroke-width="2" stroke-linejoin="round" stroke-linecap="round"/><rect x="347.8" y="718.2" width="1.8" height="11.5" fill="#fff"/><rect x="350.5" y="718.2" width="1.8" height="11.5" fill="#fff"/><rect x="353.4" y="718.2" width="1.8" height="11.5" fill="#fff"/><path d="M405,714 L390,722.5 L405,731 Z" fill="none" stroke="#ffffff" stroke-width="2" stroke-linejoin="round" stroke-linecap="round"/><rect x="422.3" y="709.6" width="64.5" height="23.5" rx="1.5" fill="none" stroke="#ffffff" stroke-width="2" stroke-linejoin="round" stroke-linecap="round"/><path d="M504.5,714 L520,722.5 L504.5,731 Z" fill="none" stroke="#ffffff" stroke-width="2" stroke-linejoin="round" stroke-linecap="round"/><circle cx="555.4" cy="719.3" r="6.3" fill="none" stroke="#fff" stroke-width="1.9"/><g transform="translate(563.5,728) rotate(45)"><rect x="-5" y="-2.6" width="10" height="5.2" rx="1.2" fill="none" stroke="#fff" stroke-width="1.6"/></g><text x="555.4" y="722" font-size="7.5" fill="#fff" text-anchor="middle" font-family="Liberation Sans" font-weight="bold">%</text><rect x="582.1" y="706.7" width="53" height="33" fill="#fff"/><rect x="584" y="708.6" width="49.2" height="29.2" fill="none" stroke="#555" stroke-width="0.9"/><rect x="608.1" y="708.6" width="1" height="29.2" fill="#555"/><rect x="608.4" y="708.6" width="1.5" height="29.2" fill="#fff"/><line x1="584" y1="723.1" x2="633.2" y2="723.1" stroke="#666" stroke-width="0.9"/><line x1="607.8" y1="708.6" x2="607.8" y2="737.8" stroke="#555" stroke-width="0.9"/><line x1="610.2" y1="708.6" x2="610.2" y2="737.8" stroke="#555" stroke-width="0.9"/><path d="M650.8,716.8 L650.8,712.5 L655,712.5 M664.5,712.5 L668.7,712.5 L668.7,716.8 M650.8,727 L650.8,731.6 L655,731.6" fill="none" stroke="#fff" stroke-width="1.8" stroke-linecap="square"/><circle cx="658.7" cy="721.2" r="5.2" fill="none" stroke="#fff" stroke-width="1.7"/><g transform="translate(666,728.5) rotate(45)"><rect x="-3.6" y="-2" width="7.2" height="4" rx="1" fill="none" stroke="#fff" stroke-width="1.5"/></g><rect x="690.5" y="712" width="29" height="21.3" rx="2.5" fill="none" stroke="#ffffff" stroke-width="2" stroke-linejoin="round" stroke-linecap="round"/><rect x="702.4" y="734" width="5.3" height="3" fill="#fff"/><rect x="698.8" y="736.6" width="12.5" height="1.9" rx="0.8" fill="#fff"/><text x="705" y="726.3" font-size="8.5" fill="#fff" text-anchor="middle" font-weight="bold">固定</text><rect x="742.6" y="712.8" width="19" height="14.6" rx="1.5" fill="none" stroke="#ffffff" stroke-width="2" stroke-linejoin="round" stroke-linecap="round"/><path d="M744.8,727.5 L744.8,732.6 M758.8,727.5 L758.8,732.6" fill="none" stroke="#ffffff" stroke-width="2" stroke-linejoin="round" stroke-linecap="round"/><polygon points="797.4,710.8 802.7,717.1 810.3,720.2 806.0,727.2 805.4,735.4 797.4,733.4 789.4,735.4 788.8,727.2 784.5,720.2 792.1,717.1" fill="none" stroke="#fff" stroke-width="1.9" stroke-linejoin="round" stroke-miterlimit="1"/><path d="M793.1,722.6 L793.1,719.2 L801.6,719.2 L801.6,721 L798.4,729.4 L800,729.4 L800,730.8 L793.8,730.8 L793.8,729.4 L795.2,729.4 L799,721.2 L794.4,721.2 L794.4,722.6 Z" fill="#fff" stroke="#fff" stroke-width="0.5" stroke-linejoin="round"/><rect x="833.2" y="717.4" width="21.5" height="15.2" rx="2.5" fill="none" stroke="#ffffff" stroke-width="2" stroke-linejoin="round" stroke-linecap="round"/><path d="M838.6,717 L838.6,714.4 Q838.6,713.6 839.6,713.6 L847.4,713.6 Q848.3,713.6 848.3,714.4 L848.3,717" fill="none" stroke="#ffffff" stroke-width="2" stroke-linejoin="round" stroke-linecap="round"/><rect x="836.5" y="721.6" width="1.9" height="6.8" fill="#fff"/><rect x="840.8000000000001" y="721.6" width="1.9" height="6.8" fill="#fff"/><rect x="845.1" y="721.6" width="1.9" height="6.8" fill="#fff"/><rect x="849.3000000000001" y="721.6" width="1.9" height="6.8" fill="#fff"/><rect x="879.4" y="717.3" width="21.7" height="15.5" rx="2.5" fill="none" stroke="#ffffff" stroke-width="2" stroke-linejoin="round" stroke-linecap="round"/><path d="M884.5,717 L884.5,714.2 Q884.5,713.4 885.5,713.4 L894.2,713.4 Q895.2,713.4 895.2,714.2 L895.2,717" fill="none" stroke="#ffffff" stroke-width="2" stroke-linejoin="round" stroke-linecap="round"/><text x="890.2" y="728.3" font-size="8" fill="#fff" text-anchor="middle" font-weight="bold">自訂</text><path d="M926,711.2 L942.6,711.2 L942.6,717.4 L940.3,717.4 L940.3,732.3 L926,732.3 Z" fill="none" stroke="#ffffff" stroke-width="2" stroke-linejoin="round" stroke-linecap="round"/><path d="M940.3,717.4 L942.6,717.4 L942.6,724.8 L940.3,724.8 M940.3,724.8 L942.6,724.8 L942.6,730 L940.3,730" fill="none" stroke="#ffffff" stroke-width="2" stroke-linejoin="round" stroke-linecap="round" stroke-width="1.6"/></svg>
<div class="ab" style="left:422.3px;top:713px;width:64.5px;text-align:center;color:#fff;font-size:13px;line-height:17px">2/3</div>
<div class="tb" style="left:45px;width:60px;top:745px">儲存</div>
<div class="tb" style="left:90px;width:60px;top:745px">回目次</div>
<div class="tb" style="left:183px;width:60px;top:745px">畫筆</div>
<div class="tb" style="left:229px;width:60px;top:745px">螢光筆</div>
<div class="tb" style="left:275px;width:60px;top:745px">橡皮擦</div>
<div class="tb" style="left:321px;width:60px;top:745px">全刪</div>
<div class="tb" style="left:367px;width:60px;top:745px">上一頁</div>
<div class="tb" style="left:424px;width:60px;top:745px">頁碼工具</div>
<div class="tb" style="left:482px;width:60px;top:745px">下一頁</div>
<div class="tb" style="left:527px;width:60px;top:745px">原尺寸</div>
<div class="tb" style="left:578px;width:60px;top:745px">四格放大</div>
<div class="tb" style="left:629px;width:60px;top:745px">局部放大</div>
<div class="tb" style="left:675px;width:60px;top:745px">顯示比例</div>
<div class="tb" style="left:721px;width:60px;top:745px">白板</div>
<div class="tb" style="left:767px;width:60px;top:745px">選號器</div>
<div class="tb" style="left:813px;width:60px;top:745px">工具箱</div>
<div class="tb" style="left:859px;width:60px;top:745px">自訂</div>
<div class="tb" style="left:905px;width:60px;top:745px">頁籤</div>
<div class="tb" style="left:137.3px;width:60px;top:742.8px;font-size:12px;line-height:18px">滑鼠</div>
<div class="ab" style="left:9px;top:7px;width:16px;height:16px;background:linear-gradient(135deg,#fcc33a,#f7a20f)"></div>
<div class="ab" style="left:30.5px;top:6.5px;font-size:12px;line-height:18px;color:#000">翰林電子書</div>
<svg class="ab" style="left:9px;top:7px" width="16" height="16"><rect x="3.8" y="2.2" width="8.6" height="11" rx="1.5" fill="none" stroke="#fde7b0" stroke-width="1"/><line x1="4" y1="10.5" x2="12.2" y2="10.5" stroke="#fde7b0" stroke-width="1"/><line x1="6" y1="5" x2="9" y2="8" stroke="#fff4d8" stroke-width="1"/></svg>
<div class="ab" style="left:890px;top:15px;width:10px;height:1px;background:#000"></div>
<div class="ab" style="left:935px;top:10px;width:10px;height:10px;border:1px solid #000"></div>
<svg class="ab" style="left:980px;top:10px" width="12" height="12"><path d="M1 0.5 L11 10.5 M11 0.5 L1 10.5" stroke="#000" stroke-width="1.1"/></svg>
<div class="ab" style="left:0;top:0;width:1010px;height:1px;background:#5f5f5f"></div>
<div class="ab" style="left:0;top:0;width:1px;height:761px;background:#6f6f6f"></div>
<div class="ab" style="left:1008.5px;top:0;width:1.5px;height:761px;background:#6f6f6f"></div>
</body></html>
